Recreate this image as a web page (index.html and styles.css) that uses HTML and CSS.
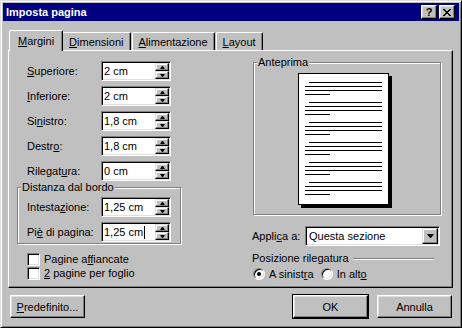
FILE: index.html
```html
<!DOCTYPE html>
<html lang="it">
<head>
  <meta charset="UTF-8" />
  <title>Imposta pagina</title>
  <link rel="stylesheet" href="styles.css">
</head>
<body>
  <div class="dialog">
    <div class="titlebar">
      <span class="title">Imposta pagina</span>
      <div class="caption-btns">
        <span class="cap-btn">?</span>
        <span class="cap-btn">
          <svg width="8" height="7" viewBox="0 0 8 7"><path d="M0 0h2v1H0zM6 0h2v1H6zM1 1h2v1H1zM5 1h2v1H5zM2 2h4v1H2zM3 3h2v1H3zM2 4h4v1H2zM1 5h2v1H1zM5 5h2v1H5zM0 6h2v1H0zM6 6h2v1H6z" fill="#000"/></svg>
        </span>
      </div>
    </div>

    <div class="dialog-body">
      <div class="tabs">
        <div class="tab active"><u>M</u>argini</div>
        <div class="tab"><u>D</u>imensioni</div>
        <div class="tab"><u>A</u>limentazione</div>
        <div class="tab"><u>L</u>ayout</div>
      </div>

      <div class="panel">
        <!-- colonna sinistra: margini -->
        <div class="col-left">
          <div class="fields">
            <div class="field">
              <label><u>S</u>uperiore:</label>
              <div class="spin-edit"><span class="value">2 cm</span><div class="spin"><span class="spin-btn up"></span><span class="spin-btn down"></span></div></div>
            </div>
            <div class="field">
              <label><u>I</u>nferiore:</label>
              <div class="spin-edit"><span class="value">2 cm</span><div class="spin"><span class="spin-btn up"></span><span class="spin-btn down"></span></div></div>
            </div>
            <div class="field">
              <label>Si<u>n</u>istro:</label>
              <div class="spin-edit"><span class="value">1,8 cm</span><div class="spin"><span class="spin-btn up"></span><span class="spin-btn down"></span></div></div>
            </div>
            <div class="field">
              <label>Destr<u>o</u>:</label>
              <div class="spin-edit"><span class="value">1,8 cm</span><div class="spin"><span class="spin-btn up"></span><span class="spin-btn down"></span></div></div>
            </div>
            <div class="field">
              <label>Rilegat<u>u</u>ra:</label>
              <div class="spin-edit"><span class="value">0 cm</span><div class="spin"><span class="spin-btn up"></span><span class="spin-btn down"></span></div></div>
            </div>
          </div>

          <div class="group border-group">
            <div class="group-title">Distanza dal bordo</div>
            <div class="fields">
              <div class="field">
                <label>Intesta<u>z</u>ione:</label>
                <div class="spin-edit"><span class="value">1,25 cm</span><div class="spin"><span class="spin-btn up"></span><span class="spin-btn down"></span></div></div>
              </div>
              <div class="field">
                <label>Pi<u>è</u> di pagina:</label>
                <div class="spin-edit"><span class="value">1,25 cm<span class="caret"></span></span><div class="spin"><span class="spin-btn up"></span><span class="spin-btn down"></span></div></div>
              </div>
            </div>
          </div>

          <div class="checks">
            <div class="check"><span class="checkbox"></span><span>Pagine a<u>ff</u>iancate</span></div>
            <div class="check"><span class="checkbox"></span><span><u>2</u> pagine per foglio</span></div>
          </div>
        </div>

        <!-- colonna destra: anteprima -->
        <div class="col-right">
          <div class="group preview-group">
            <div class="group-title">Anteprima</div>
            <div class="page">
              <div class="para"><div class="line first"></div><div class="line"></div><div class="line"></div><div class="line short"></div></div>
              <div class="para"><div class="line first"></div><div class="line"></div><div class="line"></div><div class="line short"></div></div>
              <div class="para"><div class="line first"></div><div class="line"></div><div class="line"></div><div class="line short"></div></div>
              <div class="para"><div class="line first"></div><div class="line"></div><div class="line"></div><div class="line short"></div></div>
              <div class="para"><div class="line first"></div><div class="line"></div><div class="line"></div><div class="line short"></div></div>
              <div class="para"><div class="line first"></div><div class="line"></div><div class="line"></div><div class="line short"></div></div>
            </div>
          </div>

          <div class="apply-row">
            <label>Appli<u>c</u>a a:</label>
            <div class="combo">
              <span class="combo-text">Questa sezione</span>
              <span class="combo-btn"><span class="arrow-down"></span></span>
            </div>
          </div>

          <div class="bind-row">
            <span>Posizione rilegatura</span>
            <span class="bind-line"></span>
          </div>
          <div class="radios">
            <div class="radio-opt"><span class="radio checked"><span class="dot"></span></span><span>A sinist<u>r</u>a</span></div>
            <div class="radio-opt"><span class="radio"></span><span>In alt<u>o</u></span></div>
          </div>
        </div>
      </div>

      <div class="footer">
        <button class="btn"><u>P</u>redefinito...</button>
        <button class="btn default">OK</button>
        <button class="btn">Annulla</button>
      </div>
    </div>
  </div>
</body>
</html>
```

FILE: styles.css
```css
body {
  margin: 0;
  font-family: 'Liberation Sans', Arial, sans-serif;
  font-size: 11px;
  color: #000;
  background: #c0c0c0;
}

.dialog {
  width: 462px;
  height: 328px;
  box-sizing: border-box;
  padding: 2px;
  background: #c0c0c0;
  border: 1px solid;
  border-color: #dfdfdf #000 #000 #dfdfdf;
  box-shadow: inset 1px 1px 0 #fff, inset -1px -1px 0 #808080;
  display: flex;
  flex-direction: column;
}

/* barra del titolo */
.titlebar {
  height: 18px;
  flex: none;
  background: #000080;
  color: #fff;
  font-weight: bold;
  display: flex;
  align-items: center;
  justify-content: space-between;
  padding-left: 3px;
}

.caption-btns {
  display: flex;
  gap: 2px;
  margin-right: 4px;
}

.cap-btn {
  width: 16px;
  height: 14px;
  box-sizing: border-box;
  background: #c0c0c0;
  border: 1px solid;
  border-color: #fff #000 #000 #fff;
  box-shadow: inset -1px -1px 0 #808080, inset 1px 1px 0 #dfdfdf;
  color: #000;
  font-size: 11px;
  line-height: 1;
  display: flex;
  align-items: center;
  justify-content: center;
}

.dialog-body {
  flex: 1;
  padding: 0 6px 0 5px;
  display: flex;
  flex-direction: column;
}

/* schede */
.tabs {
  display: flex;
  align-items: flex-end;
  height: 20px;
  margin-top: 9px;
  padding-left: 3px;
}

.tab {
  height: 18px;
  box-sizing: border-box;
  padding: 0 6px;
  margin-right: 1px;
  border: 1px solid;
  border-bottom: none;
  border-color: #fff #000 transparent #fff;
  border-radius: 2px 2px 0 0;
  box-shadow: inset -1px 0 0 #808080;
  display: flex;
  align-items: center;
}

.tab.active {
  height: 21px;
  padding: 0 8px;
  margin: 0 -1px -1px -2px;
  position: relative;
  z-index: 1;
  background: #c0c0c0;
}

.panel {
  height: 238px;
  flex: none;
  box-sizing: border-box;
  border: 1px solid;
  border-color: #fff #000 #000 #fff;
  box-shadow: inset -1px -1px 0 #808080;
  display: flex;
}

.col-left {
  width: 244px;
  box-sizing: border-box;
  padding: 10px 0 0 8px;
}

.col-right {
  width: 188px;
  padding-top: 11px;
}

.fields {
  display: flex;
  flex-direction: column;
  gap: 5px;
}

.col-left > .fields {
  padding-left: 10px;
}

.field {
  display: flex;
  align-items: center;
  height: 20px;
}

.field label {
  width: 74px;
}

/* campo numerico con freccette */
.spin-edit {
  width: 70px;
  height: 20px;
  box-sizing: border-box;
  padding: 1px;
  background: #fff;
  border: 1px solid;
  border-color: #808080 #fff #fff #808080;
  box-shadow: inset 1px 1px 0 #000, inset -1px -1px 0 #dfdfdf;
  display: flex;
  align-items: center;
}

.spin-edit .value {
  flex: 1;
  padding-left: 1px;
  display: flex;
  align-items: center;
}

.caret {
  width: 1px;
  height: 13px;
  background: #000;
  margin-left: 1px;
}

.spin {
  width: 14px;
  height: 100%;
  display: flex;
  flex-direction: column;
}

.spin-btn {
  flex: 1;
  box-sizing: border-box;
  background: #c0c0c0;
  border: 1px solid;
  border-color: #dfdfdf #000 #000 #dfdfdf;
  box-shadow: inset -1px -1px 0 #808080, inset 1px 1px 0 #fff;
  display: flex;
  align-items: center;
  justify-content: center;
}

.spin-btn::before {
  content: "";
  width: 1px;
  height: 0;
  border-left: 2px solid transparent;
  border-right: 2px solid transparent;
}

.spin-btn.up::before {
  border-bottom: 3px solid #000;
}

.spin-btn.down::before {
  border-top: 3px solid #000;
}

/* riquadri incisi */
.group {
  box-sizing: border-box;
  border: 1px solid #808080;
  box-shadow: 1px 1px 0 #fff, inset 1px 1px 0 #fff;
}

.group-title {
  width: fit-content;
  margin: -7px 0 0 3px;
  padding: 0 1px;
  line-height: 13px;
  background: #c0c0c0;
}

.border-group {
  width: 164px;
  margin-top: 6px;
  padding-bottom: 1px;
}

.border-group .fields {
  margin-top: 3px;
  padding-left: 9px;
}

.checks {
  margin-top: 8px;
  padding-left: 10px;
  display: flex;
  flex-direction: column;
}

.check {
  height: 14px;
  display: flex;
  align-items: center;
  gap: 4px;
}

.checkbox {
  width: 13px;
  height: 13px;
  box-sizing: border-box;
  background: #fff;
  border: 1px solid;
  border-color: #808080 #fff #fff #808080;
  box-shadow: inset 1px 1px 0 #000, inset -1px -1px 0 #dfdfdf;
}

/* anteprima pagina */
.preview-group {
  width: 188px;
  height: 153px;
}

.page {
  width: 91px;
  height: 132px;
  box-sizing: border-box;
  margin: 4px 0 0 44px;
  padding: 8px 0 0 6px;
  background: #fff;
  border: 1px solid #000;
  box-shadow: 3px 3px 0 #000;
}

.para {
  margin-bottom: 7px;
}

.line {
  width: 77px;
  height: 1px;
  background: #000;
  margin-bottom: 3px;
}

.line.first {
  width: 73px;
  margin-left: 4px;
}

.line.short {
  width: 25px;
  margin-bottom: 0;
}

.apply-row {
  margin: 11px 0 0 -1px;
  display: flex;
  align-items: center;
}

.apply-row label {
  width: 53px;
}

.combo {
  width: 135px;
  height: 20px;
  box-sizing: border-box;
  padding: 1px;
  background: #fff;
  border: 1px solid;
  border-color: #808080 #fff #fff #808080;
  box-shadow: inset 1px 1px 0 #000, inset -1px -1px 0 #dfdfdf;
  display: flex;
  align-items: center;
}

.combo-text {
  flex: 1;
  padding-left: 2px;
}

.combo-btn {
  width: 16px;
  height: 100%;
  box-sizing: border-box;
  background: #c0c0c0;
  border: 1px solid;
  border-color: #dfdfdf #000 #000 #dfdfdf;
  box-shadow: inset -1px -1px 0 #808080, inset 1px 1px 0 #fff;
  display: flex;
  align-items: center;
  justify-content: center;
}

.arrow-down {
  width: 1px;
  height: 0;
  border-left: 3px solid transparent;
  border-right: 3px solid transparent;
  border-top: 4px solid #000;
}

.bind-row {
  margin: 6px 0 0 -1px;
  line-height: 13px;
  display: flex;
  align-items: center;
}

.bind-line {
  flex: 1;
  margin: 0 7px 0 4px;
  border-top: 1px solid #808080;
  border-bottom: 1px solid #fff;
}

.radios {
  margin-top: 3px;
  display: flex;
  align-items: center;
}

.radio-opt {
  display: flex;
  align-items: center;
  gap: 4px;
}

.radio-opt + .radio-opt {
  margin-left: 7px;
}

.radio {
  width: 12px;
  height: 12px;
  box-sizing: border-box;
  border-radius: 50%;
  background: #fff;
  border: 1px solid;
  border-color: #808080 #fff #fff #808080;
  box-shadow: inset 1px 1px 0 #000, inset -1px -1px 0 #dfdfdf;
  display: flex;
  align-items: center;
  justify-content: center;
}

.radio .dot {
  width: 4px;
  height: 4px;
  border-radius: 50%;
  background: #000;
}

/* pulsanti in basso */
.footer {
  margin-top: 7px;
  padding-left: 2px;
  display: flex;
}

.btn {
  width: 75px;
  height: 23px;
  box-sizing: border-box;
  padding: 0;
  font: inherit;
  color: #000;
  background: #c0c0c0;
  border: 1px solid;
  border-color: #fff #000 #000 #fff;
  box-shadow: inset -1px -1px 0 #808080, inset 1px 1px 0 #dfdfdf;
}

.btn.default {
  margin-left: auto;
  outline: 1px solid #000;
}

.btn + .btn.default + .btn {
  margin-left: 9px;
  margin-right: 1px;
}
```
